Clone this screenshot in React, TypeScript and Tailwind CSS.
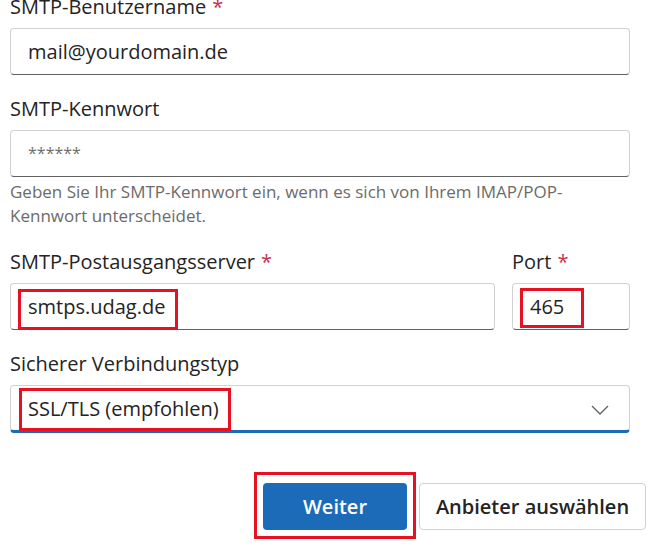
import React from 'react';

const font = { fontFamily: '"Open Sans", "Noto Sans", sans-serif' };

interface FieldProps {
  label: string;
  required?: boolean;
  children: React.ReactNode;
  className?: string;
}

const Field: React.FC<FieldProps> = ({ label, required, children, className }) => (
  <div className={className}>
    <div className="h-[28px] text-[20px] leading-[28px] text-[#242424] whitespace-nowrap">
      {label}
      {required && <span className="ml-[6px] text-[#c4314b]">*</span>}
    </div>
    <div className="mt-[7px]">{children}</div>
  </div>
);

// the red marker boxes from the screenshot annotation
const Marker: React.FC<{ className: string }> = ({ className }) => (
  <div className={`absolute border-[3px] border-[#e81123] pointer-events-none ${className}`} />
);

const TextBox: React.FC<{ value?: string; placeholder?: string; children?: React.ReactNode }> = ({
  value,
  placeholder,
  children,
}) => (
  <div className="relative h-[47px] flex items-center rounded-[4px] border border-[#d1d1d1] border-b-[#616161] bg-white pl-[17px] text-[20px]">
    {value ? (
      <span className="text-[#242424]">{value}</span>
    ) : (
      <span className="text-[#707070] text-[16px] mb-[2px]">{placeholder}</span>
    )}
    {children}
  </div>
);

export default function App() {
  return (
    <div className="w-[665px] h-[550px] overflow-hidden bg-white" style={font}>
      <div className="pl-[10px] mt-[-7px] w-[630px]">
        <Field label="SMTP-Benutzername" required>
          <TextBox value="mail@yourdomain.de" />
        </Field>

        <Field label="SMTP-Kennwort" className="mt-[20px]">
          <TextBox placeholder="******" />
        </Field>
        <p className="mt-[3px] text-[17px] leading-[24px] text-[#6b6b6b] pr-[30px]">
          Geben Sie Ihr SMTP-Kennwort ein, wenn es sich von Ihrem IMAP/POP-Kennwort unterscheidet.
        </p>

        <div className="mt-[20px] flex gap-[17px]">
          <Field label="SMTP-Postausgangsserver" required className="flex-1">
            <TextBox value="smtps.udag.de">
              <Marker className="left-[7px] top-[5px] w-[160px] h-[41px]" />
            </TextBox>
          </Field>
          <Field label="Port" required className="w-[118px]">
            <TextBox value="465">
              <Marker className="left-[7px] top-[4px] w-[64px] h-[40px]" />
            </TextBox>
          </Field>
        </div>

        <Field label="Sicherer Verbindungstyp" className="mt-[20px]">
          <div className="relative h-[48px] flex items-center justify-between rounded-[4px] border border-[#d1d1d1] border-b-[3px] border-b-[#1b6bb9] bg-white pl-[17px] pr-[20px] text-[20px] text-[#242424]">
            <span className="mt-[2px]">SSL/TLS (empfohlen)</span>
            <svg width="18" height="10" viewBox="0 0 18 10" fill="none" className="mt-[3px]">
              <path d="M1 1 L9 9 L17 1" stroke="#616161" strokeWidth="1.3" />
            </svg>
            <Marker className="left-[8px] top-[2px] w-[212px] h-[43px]" />
          </div>
        </Field>
      </div>

      <div className="mt-[50px] w-[646px] flex justify-end gap-[12px]">
        <div className="relative">
          <button className="h-[47px] w-[144px] rounded-[4px] bg-[#1b6bb9] text-white text-[20px] font-semibold">
            Weiter
          </button>
          <Marker className="left-[-9px] top-[-11px] w-[162px] h-[67px]" />
        </div>
        <button className="h-[47px] w-[227px] rounded-[4px] border border-[#d1d1d1] bg-white text-[#242424] text-[20px] font-semibold">
          Anbieter auswählen
        </button>
      </div>
    </div>
  );
}
